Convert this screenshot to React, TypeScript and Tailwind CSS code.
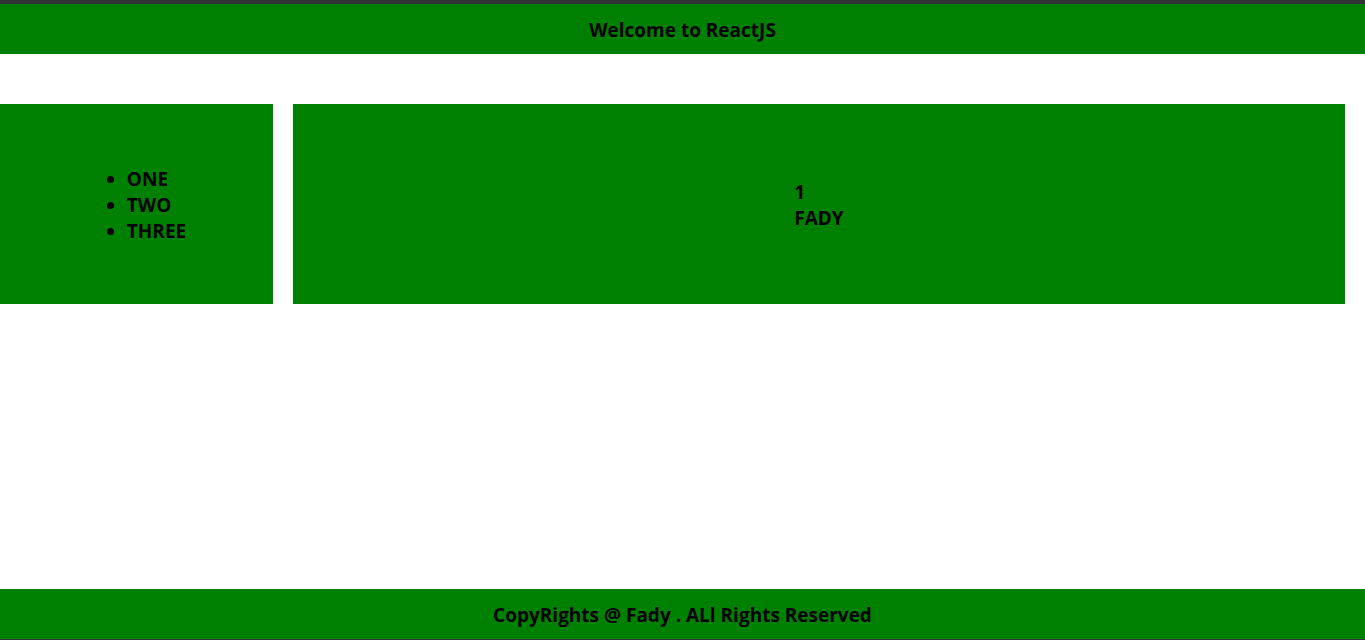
export default function App() {
  return (
    <div
      className="flex h-[640px] flex-col bg-white text-black"
      style={{ fontFamily: '"Open Sans", "Noto Sans", sans-serif' }}
    >
      <div className="h-[4px] bg-[#333333]" />
      <header className="flex h-[50px] items-center justify-center bg-[#008000] pt-[3px] text-[19px] font-bold">
        Welcome to ReactJS
      </header>
      <div className="mt-[50px] flex h-[200px] gap-[20px] pr-[20px]">
        <aside className="flex w-[273px] items-center justify-center bg-[#008000] pt-[2px]">
          <ul className="list-disc pl-[40px] text-[19px] font-bold leading-[26px]">
            <li>ONE</li>
            <li>TWO</li>
            <li>THREE</li>
          </ul>
        </aside>
        <main className="flex flex-1 items-center justify-center bg-[#008000] pt-[2px]">
          <div className="text-[19px] font-bold leading-[26px]">
            <div>1</div>
            <div>FADY</div>
          </div>
        </main>
      </div>
      <footer className="mt-auto flex h-[51px] items-center justify-center border-b border-[#333333] bg-[#008000] pt-[3px] text-[19px] font-bold">
        CopyRights @ Fady . ALl Rights Reserved
      </footer>
    </div>
  );
}
